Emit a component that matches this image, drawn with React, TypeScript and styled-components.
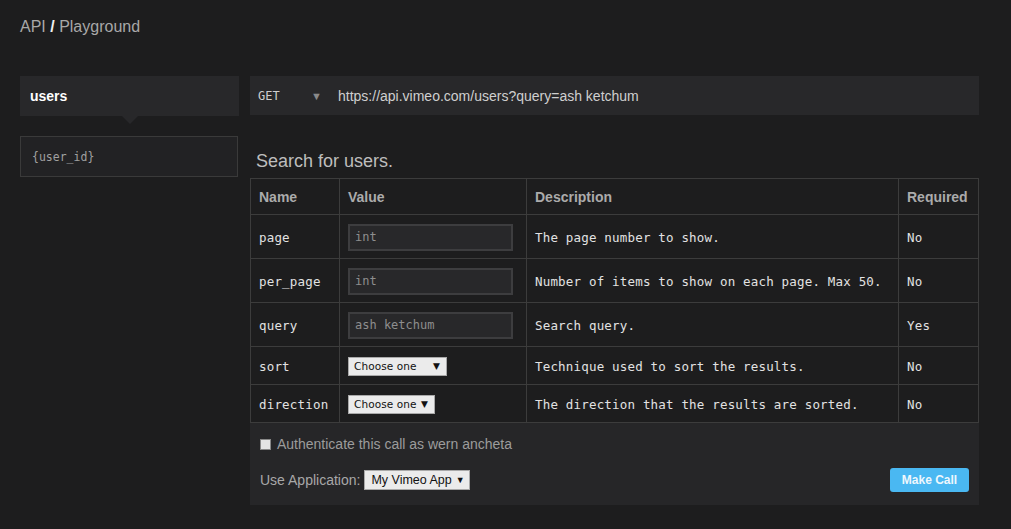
import React from 'react'
import styled, { createGlobalStyle } from 'styled-components'

const GlobalStyle = createGlobalStyle`
  html, body {
    margin: 0;
    padding: 0;
    background: #1d1d1e;
  }
  body {
    font-family: 'Liberation Sans', Arial, sans-serif;
    color: #ddd;
  }
`

const Page = styled.div`
  width: 1011px;
  height: 529px;
  box-sizing: border-box;
  padding: 17px 32px 0 20px;
  background: #1d1d1e;
`

const Breadcrumb = styled.h1`
  margin: 0;
  font-size: 16px;
  line-height: 20px;
  font-weight: normal;
  color: #a8a8a8;

  b {
    color: #f2f2f2;
  }
`

const Layout = styled.div`
  display: flex;
  gap: 11px;
  margin-top: 39px;
`

const Sidebar = styled.div`
  width: 219px;
  flex-shrink: 0;
  display: flex;
  flex-direction: column;
`

const EndpointTab = styled.div`
  position: relative;
  height: 40px;
  display: flex;
  align-items: center;
  padding-left: 10px;
  background: #28282a;
  color: #fff;
  font-weight: bold;
  font-size: 14px;

  &::after {
    content: '';
    position: absolute;
    left: 50%;
    bottom: -8px;
    margin-left: -8px;
    border-left: 8px solid transparent;
    border-right: 8px solid transparent;
    border-top: 8px solid #28282a;
  }
`

const SubEndpoint = styled.div`
  margin-top: 20px;
  margin-right: 1px;
  height: 41px;
  box-sizing: border-box;
  border: 1px solid #3a3a3a;
  background: #222224;
  display: flex;
  align-items: center;
  padding-left: 11px;
  font-family: 'DejaVu Sans Mono', monospace;
  font-size: 11.5px;
  color: #a0a0a0;
`

const Main = styled.div`
  width: 729px;
  display: flex;
  flex-direction: column;
`

const UrlBar = styled.div`
  height: 39px;
  background: #28282a;
  display: flex;
  align-items: center;
  padding-left: 8px;
  font-size: 14px;
  color: #cfcfcf;
`

const Method = styled.span`
  font-family: 'DejaVu Sans Mono', monospace;
  font-size: 12px;
  color: #cfcfcf;
  width: 53px;
`

const Caret = styled.span`
  font-size: 11px;
  color: #8a8a8a;
  width: 27px;
`

const Heading = styled.h2`
  margin: 35px 0 6px 6px;
  font-size: 18px;
  line-height: 22px;
  font-weight: normal;
  color: #bdbdbd;
`

const Table = styled.table`
  width: 100%;
  border-collapse: collapse;
  table-layout: fixed;
`

const Th = styled.th<{ $w?: number }>`
  width: ${(p) => (p.$w ? `${p.$w}px` : 'auto')};
  height: 36px;
  box-sizing: border-box;
  border: 1px solid #3c3c3c;
  padding: 0 8px;
  text-align: left;
  font-size: 14px;
  font-weight: bold;
  color: #ababab;
`

const Td = styled.td<{ $h: number }>`
  height: ${(p) => p.$h}px;
  box-sizing: border-box;
  border: 1px solid #3c3c3c;
  padding: 1px 8px 0;
  font-family: 'DejaVu Sans Mono', monospace;
  font-size: 12.5px;
  letter-spacing: 0.18px;
  color: #e2e2e2;
  white-space: nowrap;
`

const TextInput = styled.input`
  width: 165px;
  height: 27px;
  box-sizing: border-box;
  background: #28282a;
  border: 2px solid #3d3d3f;
  padding: 0 5px;
  font-family: 'DejaVu Sans Mono', monospace;
  font-size: 12px;
  color: #ddd;
  outline: none;
  vertical-align: middle;

  &::placeholder {
    color: #8e8e8e;
  }
`

const FakeSelect = styled.div<{ $w: number }>`
  display: inline-flex;
  align-items: center;
  justify-content: space-between;
  width: ${(p) => p.$w}px;
  height: 19px;
  box-sizing: border-box;
  padding: 0 6px 0 5px;
  background: #ebebeb;
  border: 1px solid #a9a9a9;
  font-family: 'DejaVu Sans', sans-serif;
  font-size: 10.5px;
  letter-spacing: 0.1px;
  color: #111;
  white-space: nowrap;
  vertical-align: middle;

  i {
    font-style: normal;
    font-size: 9px;
    margin-left: 4px;
  }
`

const Footer = styled.div`
  background: #262628;
  height: 82px;
  box-sizing: border-box;
  padding: 13px 10px 0 10px;
  display: flex;
  flex-direction: column;
  gap: 15px;
`

const CheckRow = styled.label`
  display: flex;
  align-items: center;
  gap: 6px;
  font-size: 14px;
  color: #9c9c9c;
`

const Checkbox = styled.span`
  width: 11px;
  height: 11px;
  background: #e4e4e4;
  border: 1px solid #888;
  box-sizing: border-box;
`

const AppRow = styled.div`
  display: flex;
  align-items: center;
  justify-content: space-between;
`

const AppLabel = styled.div`
  display: flex;
  align-items: center;
  gap: 4px;
  font-size: 14px;
  color: #a8a8a8;
`

const AppSelect = styled(FakeSelect)`
  height: 20px;
  padding: 0 5px 0 6px;
  font-family: 'Liberation Sans', Arial, sans-serif;
  font-size: 12.5px;
  letter-spacing: 0;
`

const MakeCall = styled.button`
  width: 79px;
  height: 24px;
  border: none;
  border-radius: 3px;
  background: #4ab8f2;
  color: #eef7fd;
  font-family: 'Liberation Sans', Arial, sans-serif;
  font-weight: bold;
  font-size: 12px;
  padding: 0;
  margin-top: 1px;
`

const params = [
  { name: 'page', kind: 'input', ph: 'int', desc: 'The page number to show.', req: 'No', h: 44 },
  { name: 'per_page', kind: 'input', ph: 'int', desc: 'Number of items to show on each page. Max 50.', req: 'No', h: 44 },
  { name: 'query', kind: 'input', ph: 'ash ketchum', desc: 'Search query.', req: 'Yes', h: 44 },
  { name: 'sort', kind: 'select', w: 99, desc: 'Technique used to sort the results.', req: 'No', h: 38 },
  { name: 'direction', kind: 'select', w: 87, desc: 'The direction that the results are sorted.', req: 'No', h: 38 },
]

export default function App() {
  return (
    <Page>
      <GlobalStyle />
      <Breadcrumb>
        API <b>/</b> Playground
      </Breadcrumb>
      <Layout>
        <Sidebar>
          <EndpointTab>users</EndpointTab>
          <SubEndpoint>{'{user_id}'}</SubEndpoint>
        </Sidebar>
        <Main>
          <UrlBar>
            <Method>GET</Method>
            <Caret>▼</Caret>
            <span>https://api.vimeo.com/users?query=ash ketchum</span>
          </UrlBar>
          <Heading>Search for users.</Heading>
          <Table>
            <thead>
              <tr>
                <Th $w={89}>Name</Th>
                <Th $w={187}>Value</Th>
                <Th $w={372}>Description</Th>
                <Th>Required</Th>
              </tr>
            </thead>
            <tbody>
              {params.map((p) => (
                <tr key={p.name}>
                  <Td $h={p.h}>{p.name}</Td>
                  <Td $h={p.h}>
                    {p.kind === 'input' ? (
                      <TextInput placeholder={p.ph} />
                    ) : (
                      <FakeSelect $w={p.w!}>
                        Choose one <i>▼</i>
                      </FakeSelect>
                    )}
                  </Td>
                  <Td $h={p.h}>{p.desc}</Td>
                  <Td $h={p.h}>{p.req}</Td>
                </tr>
              ))}
            </tbody>
          </Table>
          <Footer>
            <CheckRow>
              <Checkbox />
              Authenticate this call as wern ancheta
            </CheckRow>
            <AppRow>
              <AppLabel>
                Use Application:
                <AppSelect $w={106}>
                  My Vimeo App <i>▼</i>
                </AppSelect>
              </AppLabel>
              <MakeCall>Make Call</MakeCall>
            </AppRow>
          </Footer>
        </Main>
      </Layout>
    </Page>
  )
}
